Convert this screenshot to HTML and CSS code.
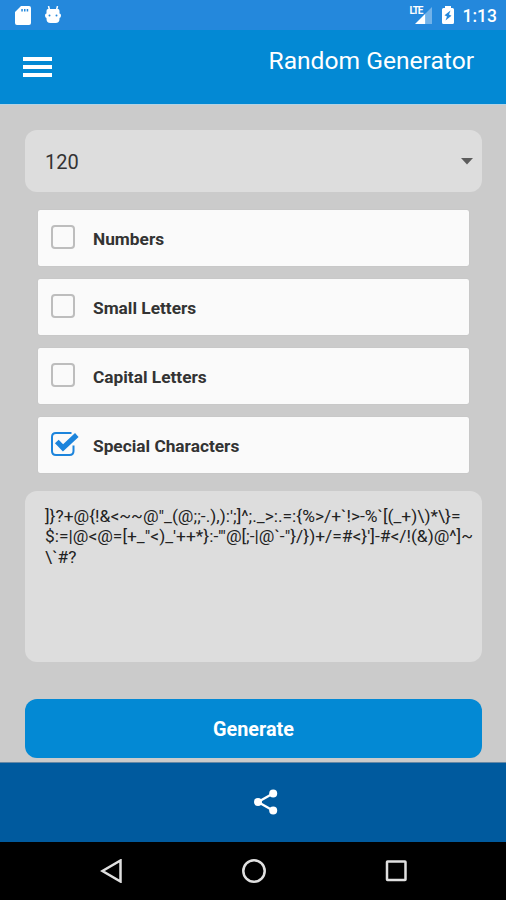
FILE: index.html
```html
<!DOCTYPE html>
<html lang="en">
<head>
    <meta charset="UTF-8">
    <meta name="viewport" content="width=device-width, initial-scale=1.0">
    <title>Random Generator</title>
    <link rel="stylesheet" href="styles.css">
</head>
<body>
    <div class="status-bar">
        <div class="status-group">
            <svg class="icon-sd" width="16" height="19" viewBox="0 0 16 19">
                <path fill="#fff" fill-rule="evenodd" d="M6 0h8q2 0 2 2v15q0 2-2 2H2q-2 0-2-2V6zM6.3 3v2.5h1.5V3zM9 3v2.5h1.5V3zM11.7 3v2.5h1.5V3z"/>
            </svg>
            <svg width="16" height="18" viewBox="0 0 16 18">
                <path stroke="#fff" stroke-width="1.5" d="M3.5 0l1 4M12.5 0l-1 4"/>
                <path fill="#fff" d="M3 3h10q1.500 0 1.500 2v2.500q1.500 0 1.500 2T14.500 12v1q0 4-4 4h-5q-4 0-4-4v-1Q0 11.500 0 9.500t1.500-2V5Q1.500 3 3 3z"/>
                <circle cx="4.500" cy="9.500" r="1" fill="#2488dc"/>
                <circle cx="11.500" cy="9.500" r="1" fill="#2488dc"/>
            </svg>
        </div>
        <div class="status-group">
            <div class="signal">
                <svg width="18" height="17" viewBox="0 0 18 17">
                    <path fill="#fff" d="M0 17L10.500 6.500V17z"/>
                    <path fill="#72b2e9" d="M10.500 6.500L17 0v17h-6.500z"/>
                </svg>
                <span class="lte">LTE</span>
            </div>
            <svg class="icon-battery" width="12" height="18" viewBox="0 0 12 18">
                <path fill="#fff" d="M3 0h6v2h1.500Q12 2 12 3.500v13q0 1.500-1.500 1.500h-9Q0 18 0 16.500v-13Q0 2 1.500 2H3z"/>
                <path fill="#2488dc" d="M8.500 4.500L2.500 9.300l2.500 1.200-1.500 4L9.500 9.700 7 8.500z"/>
            </svg>
            <span class="clock">1:13</span>
        </div>
    </div>

    <header class="header">
        <button class="menu-btn" aria-label="Menu">
            <span></span>
            <span></span>
            <span></span>
        </button>
        <h1 class="title">Random Generator</h1>
    </header>

    <main class="content">
        <div class="select">
            <span>120</span>
            <svg width="12" height="7" viewBox="0 0 12 7"><path fill="#5c5c5c" d="M0 0h12L6 6.500z"/></svg>
        </div>

        <div class="options">
            <label class="option">
                <span class="checkbox"></span>
                Numbers
            </label>
            <label class="option">
                <span class="checkbox"></span>
                Small Letters
            </label>
            <label class="option">
                <span class="checkbox"></span>
                Capital Letters
            </label>
            <label class="option">
                <svg class="checked" width="28" height="24" viewBox="0 0 28 24">
                    <path fill="none" stroke="#1c84dc" stroke-width="2" d="M20.500 1H5Q1 1 1 5v14q0 4 4 4h13.500q4 0 4-4v-5.500"/>
                    <path fill="none" stroke="#1c84dc" stroke-width="5.200" d="M5.800 9.500l6.200 6.300L25.800 3"/>
                </svg>
                Special Characters
            </label>
        </div>

        <div class="result">
            <div>]}?+@{!&amp;&lt;~~@"_(@;;-.),):';]^;._&gt;:.=:{%&gt;/+`!&gt;-%`[(_+)\)*\}=</div>
            <div>$:=|@&lt;@=[+_"&lt;)_'++*}:-'"@[;-|@`-"}/})+/=#&lt;}']-#&lt;/!(&amp;)@^]~</div>
            <div>\`#?</div>
        </div>

        <button class="btn">Generate</button>
    </main>

    <footer class="share-bar">
        <svg width="24" height="26" viewBox="0 0 24 26">
            <path fill="none" stroke="#fff" stroke-width="2.300" d="M19 4.500L4 13l15 8.500"/>
            <g fill="#fff">
                <circle cx="19.200" cy="4.500" r="4"/>
                <circle cx="4" cy="13" r="4"/>
                <circle cx="19.200" cy="21.500" r="4"/>
            </g>
        </svg>
    </footer>

    <nav class="nav-bar">
        <svg width="24" height="24" viewBox="0 0 24 24"><path d="M21.500 1.500v21L3.500 12z"/></svg>
        <svg width="24" height="24" viewBox="0 0 24 24"><circle cx="12" cy="12" r="10.700"/></svg>
        <svg width="24" height="24" viewBox="0 0 24 24"><rect x="3" y="2.500" width="18.500" height="18.500" rx="0.500"/></svg>
    </nav>
</body>
</html>
```

FILE: styles.css
```css
:root {
    --primary: #0389d4;
    --primary-dark: #005a9e;
    --status: #2488dc;
    --background: #cbcbcb;
    --field: #dddddd;
    --card-background: #fafafa;
}
* {
    margin: 0;
    padding: 0;
    box-sizing: border-box;
}
body {
    display: flex;
    flex-direction: column;
    height: 900px;
    overflow: hidden;
    font-family: Roboto, sans-serif;
    color: #333333;
    background-color: var(--background);
}
svg {
    display: block;
    flex-shrink: 0;
}
button {
    border: none;
    font-family: inherit;
    cursor: pointer;
}

/* Status bar */
.status-bar {
    display: flex;
    justify-content: space-between;
    height: 30px;
    padding: 6px 9px 0 15px;
    color: white;
    background-color: var(--status);
}
.status-group {
    display: flex;
    align-items: flex-start;
}
.icon-sd {
    margin-right: 14px;
}
.signal {
    position: relative;
    padding-top: 1px;
    margin-right: 9px;
}
.lte {
    position: absolute;
    top: -1px;
    left: -5px;
    font-size: 10px;
    font-weight: bold;
    line-height: 11px;
    letter-spacing: -1.2px;
}
.icon-battery {
    margin-right: 9px;
}
.clock {
    font-size: 17.5px;
    font-weight: 500;
    line-height: 20px;
}

/* Header */
.header {
    display: flex;
    justify-content: space-between;
    align-items: flex-start;
    height: 75px;
    padding: 15px 32px 0 23px;
    color: white;
    background-color: var(--primary);
    border-bottom: 1px solid #b5d3e4;
}
.menu-btn {
    display: flex;
    flex-direction: column;
    gap: 4px;
    width: 29px;
    margin-top: 12px;
    background: none;
}
.menu-btn span {
    width: 100%;
    height: 4px;
    background-color: white;
}
.title {
    font-size: 24.6px;
    font-weight: normal;
    line-height: 32px;
}

/* Content */
.content {
    flex: 1;
    padding: 25px 24px 0 25px;
}
.select {
    display: flex;
    justify-content: space-between;
    align-items: center;
    height: 62px;
    padding: 1px 9px 0 20px;
    border-radius: 12px;
    font-size: 20px;
    background-color: var(--field);
}
.options {
    display: grid;
    gap: 13px;
    margin: 18px 13px;
}
.option {
    display: flex;
    align-items: center;
    height: 56px;
    padding: 2px 13px 0;
    border-radius: 2px;
    font-size: 17.3px;
    font-weight: bold;
    background-color: var(--card-background);
    box-shadow: 0 0 1px rgba(0, 0, 0, 0.15);
}
.checkbox {
    width: 24px;
    height: 24px;
    margin: -4px 18px 0 0;
    border: 2px solid #bdbdbd;
    border-radius: 4px;
}
.checked {
    margin: -4px 14px 0 0;
}
.result {
    height: 171px;
    padding: 15px 0 0 20px;
    border-radius: 12px;
    font-size: 17.4px;
    line-height: 20.3px;
    white-space: nowrap;
    color: #222222;
    background-color: var(--field);
}
.btn {
    display: block;
    width: 100%;
    height: 59px;
    padding-top: 2px;
    margin-top: 37px;
    border-radius: 12px;
    font-size: 19.8px;
    font-weight: bold;
    color: white;
    background-color: var(--primary);
}

/* Bottom bars */
.share-bar {
    display: flex;
    justify-content: center;
    align-items: center;
    height: 80px;
    padding: 0 0 2px 26px;
    background-color: var(--primary-dark);
    border-top: 1px solid #6688a5;
}
.nav-bar {
    display: flex;
    justify-content: space-between;
    height: 58px;
    padding: 17px 98px 0 99px;
    background-color: black;
}
.nav-bar svg {
    fill: none;
    stroke: #e0e0e0;
    stroke-width: 2.5;
}
```
